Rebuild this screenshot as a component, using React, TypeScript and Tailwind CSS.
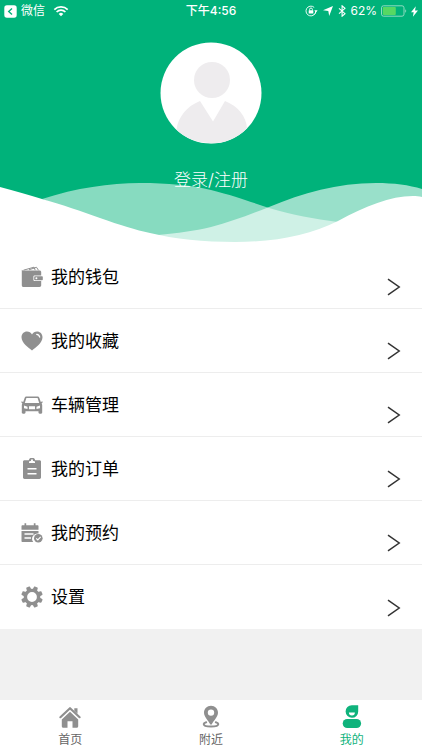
import type { ReactNode } from "react"

interface MenuItem {
  id: string
  label: string
  icon: ReactNode
}

interface TabItem {
  id: string
  label: string
  icon: ReactNode
  active?: boolean
}

function WalletIcon() {
  return (
    <svg viewBox="0 0 22 22" className="size-[22px]" aria-hidden="true">
      <path d="M2.5 4.2 13 1.2l1.2 3M8 3.8l7.5-2.5 2 3" fill="none" stroke="#8f8f8f" strokeWidth="1" />
      <path
        d="M.8 3.600c0 .7.700 1 1.700 1h16c1 0 1.700.6 1.700 1.500v3.400h-6.400c-.9 0-1.400.5-1.400 1.300v3c0 .8.500 1.300 1.400 1.300h6.400v4.200c0 1-.7 1.700-1.700 1.700h-16c-1 0-1.700-.7-1.700-1.800V3.600Z"
        fill="#8f8f8f"
      />
      <rect x="13.200" y="10.300" width="8.600" height="4" rx="0.800" fill="#8f8f8f" />
      <circle cx="15.400" cy="12.300" r="1" fill="#fff" />
    </svg>
  )
}

function HeartIcon() {
  return (
    <svg viewBox="0 0 22 22" className="size-[22px]" aria-hidden="true">
      <path
        d="M11 20.500C7.500 17.500.5 13 .5 7.200.5 3.900 2.900 1.500 6 1.500c2.200 0 4 1.100 5 2.900 1-1.800 2.800-2.900 5-2.900 3.100 0 5.500 2.400 5.500 5.700 0 5.800-7 10.300-10.500 13.300Z"
        fill="#8f8f8f"
      />
      <path d="M15.700 4.400c1.600.2 2.700 1.200 3 2.800" fill="none" stroke="#fff" strokeWidth="1.200" strokeLinecap="round" />
    </svg>
  )
}

function CarIcon() {
  return (
    <svg viewBox="0 0 22 22" className="size-[22px]" aria-hidden="true">
      <path
        fillRule="evenodd"
        d="M5.300 2.500h11.400c.8 0 1.300.4 1.600 1.200L19.800 8l1.700-.7v1.500l-.9.600c.4.500.6 1.100.6 1.800v7.300c0 .8-.5 1.200-1.300 1.200h-1.200c-.8 0-1.200-.5-1.200-1.200v-1.300h-13v1.300c0 .7-.5 1.200-1.200 1.200H2.100c-.8 0-1.300-.4-1.300-1.200v-7.300c0-.7.200-1.300.6-1.800L.5 8.800V7.300L2.200 8l1.500-4.300c.3-.8.800-1.200 1.600-1.200ZM5.400 4 3.800 9h14.400l-1.600-5H5.400ZM3 11.500v2.700l3.500.8v-2.300L3 11.500Zm16 0-3.500 1.200V15l3.500-.8v-2.700ZM8 12.200v3h6v-3H8Z"
        fill="#8f8f8f"
      />
    </svg>
  )
}

function ClipboardIcon() {
  return (
    <svg viewBox="0 0 22 22" className="size-[22px]" aria-hidden="true">
      <path
        fillRule="evenodd"
        d="M3.500 2.200h4.300a3.300 3.300 0 0 1 6.400 0h4.300c.8 0 1.500.6 1.500 1.400v16c0 .8-.7 1.400-1.500 1.400h-15c-.8 0-1.500-.6-1.500-1.400v-16c0-.8.700-1.400 1.500-1.400ZM11 1.300a1 1 0 0 0-1 1c0 .2 0 .4.200.5L8 3.500V5h6V3.500l-2.200-.7.200-.5a1 1 0 0 0-1-1ZM6.500 10v1.600h9V10h-9Zm0 5v1.600h9V15h-9Z"
        fill="#8f8f8f"
      />
    </svg>
  )
}

function CalendarIcon() {
  return (
    <svg viewBox="0 0 22 22" className="size-[22px]" aria-hidden="true">
      <path
        d="M1.500 3.300h2V1.300h1.700v2h7.600v-2h1.700v2h2c.6 0 1 .4 1 1v3.500H.5V4.300c0-.6.400-1 1-1Z"
        fill="#8f8f8f"
      />
      <path d="M.5 9h17v2.600a5.300 5.300 0 0 0-5.300 8.400H1.500c-.6 0-1-.4-1-1V9Z" fill="#8f8f8f" />
      <path d="M3.500 12h9M3.500 16h6.500" stroke="#fff" strokeWidth="1.400" />
      <circle cx="17.300" cy="16.300" r="4.300" fill="#8f8f8f" />
      <path d="m15.200 16.300 1.600 1.600 2.900-3" fill="none" stroke="#fff" strokeWidth="1.200" />
    </svg>
  )
}

function GearIcon() {
  return (
    <svg viewBox="0 0 22 22" className="size-[22px]" aria-hidden="true">
      <circle cx="11" cy="11" r="6.600" fill="none" stroke="#8f8f8f" strokeWidth="3.400" />
      {[22.5, 67.5, 112.5, 157.5, 202.5, 247.5, 292.5, 337.5].map((angle) => (
        <path
          key={angle}
          d="M8.600 3.800 9 .8c.1-.4.300-.6.700-.6h2.600c.4 0 .6.200.7.600l.4 3Z"
          transform={`rotate(${angle} 11 11)`}
          fill="#8f8f8f"
        />
      ))}
    </svg>
  )
}

function HomeIcon() {
  return (
    <svg viewBox="0 0 24 24" className="size-6" aria-hidden="true">
      <path d="M2.400 13.200 12 4.200l9.600 9" fill="none" stroke="#8f8f8f" strokeWidth="2.200" strokeLinecap="round" strokeLinejoin="round" />
      <path d="M16.300 4.300h3.200v5.500l-3.200-3V4.300Z" fill="#8f8f8f" />
      <path d="m12 7.700 8.200 7.700v6.900c0 .9-.6 1.500-1.500 1.500h-4.200v-6.500h-5v6.500H5.300c-.9 0-1.500-.6-1.500-1.500v-6.900L12 7.700Z" fill="#8f8f8f" />
    </svg>
  )
}

function PinIcon() {
  return (
    <svg viewBox="0 0 24 24" className="size-6" aria-hidden="true">
      <path
        fillRule="evenodd"
        d="M12 1.800c4 0 7 3 7 6.900 0 4-4.500 8-6.200 11.500-.3.600-1.300.6-1.600 0C9.500 16.700 5 12.700 5 8.700c0-3.900 3-6.900 7-6.900Zm0 3.600a3.200 3.200 0 1 0 0 6.400 3.200 3.200 0 0 0 0-6.400Z"
        fill="#8f8f8f"
      />
      <path d="M7.200 18.200c-1.700.5-2.500 1.100-2.500 1.800 0 1.600 3.200 2.600 7.300 2.600s7.300-1 7.300-2.600c0-.7-.8-1.300-2.500-1.800" fill="none" stroke="#8f8f8f" strokeWidth="2" strokeLinecap="round" />
    </svg>
  )
}

function ProfileIcon() {
  return (
    <svg viewBox="0 0 24 24" className="size-6" aria-hidden="true">
      <path d="M11.800 1.200h6.400v6.200a6.300 6.300 0 1 1-6.400-6.200Z" fill="#0fb37c" />
      <path d="M8.900 8.400h6a3 3 0 0 1-6 0Z" fill="#fff" />
      <rect x="2.700" y="15" width="18.400" height="9" rx="4.500" fill="#0fb37c" />
    </svg>
  )
}

const menuItems: MenuItem[] = [
  { id: "wallet", label: "我的钱包", icon: <WalletIcon /> },
  { id: "favorites", label: "我的收藏", icon: <HeartIcon /> },
  { id: "vehicles", label: "车辆管理", icon: <CarIcon /> },
  { id: "orders", label: "我的订单", icon: <ClipboardIcon /> },
  { id: "bookings", label: "我的预约", icon: <CalendarIcon /> },
  { id: "settings", label: "设置", icon: <GearIcon /> },
]

const tabs: TabItem[] = [
  { id: "home", label: "首页", icon: <HomeIcon /> },
  { id: "nearby", label: "附近", icon: <PinIcon /> },
  { id: "mine", label: "我的", icon: <ProfileIcon />, active: true },
]

function StatusBar() {
  return (
    <div className="grid h-[22px] grid-cols-[1fr_auto_1fr] items-center px-1 text-xs text-white">
      <div className="flex items-center gap-1">
        <svg viewBox="0 0 13 13" className="size-[13px]" aria-hidden="true">
          <rect x="0.300" y="0.300" width="12.400" height="12.400" rx="2.600" fill="#fff" />
          <path d="M8 3.400 4.700 6.500 8 9.600" fill="none" stroke="#00b27a" strokeWidth="1.400" />
        </svg>
        <span>微信</span>
        <svg viewBox="0 0 16 12" className="ml-1 h-3 w-4" aria-hidden="true">
          <path d="M1.300 4.600a9.600 9.600 0 0 1 13.400 0M3.600 7a6.300 6.300 0 0 1 8.800 0" fill="none" stroke="#fff" strokeWidth="1.700" />
          <path d="M5.700 8.900a3.300 3.300 0 0 1 4.600 0L8 11.300 5.700 8.900Z" fill="#fff" />
        </svg>
      </div>
      <span className="font-medium">下午4:56</span>
      <div className="flex items-center justify-end gap-1">
        <svg viewBox="0 0 13 12" className="h-3 w-[13px]" aria-hidden="true">
          <path d="M10.800 6a4.900 4.900 0 1 1-1.600-3.600M9 9.800a4.900 4.900 0 0 0 1.800-3.300" fill="none" stroke="#fff" strokeWidth="0.900" />
          <path d="M9.300 5.300h3.300L11 7.400Z" fill="#fff" />
          <rect x="3.700" y="5.300" width="4.600" height="3.300" rx="0.400" fill="#fff" />
          <path d="M4.600 5.500V4.400a1.400 1.400 0 0 1 2.800 0v1.100" fill="none" stroke="#fff" strokeWidth="0.900" />
        </svg>
        <svg viewBox="0 0 12 12" className="size-3" aria-hidden="true">
          <path d="M11 1 7.200 11 6.300 6.100 1 5.200Z" fill="#fff" />
        </svg>
        <svg viewBox="0 0 8 12" className="h-3 w-2" aria-hidden="true">
          <path d="m1 3.300 6 5.400-2.900 2.500V.8L7 3.300 1 8.700" fill="none" stroke="#fff" strokeWidth="1.100" />
        </svg>
        <span>62%</span>
        <svg viewBox="0 0 26 12" className="h-3 w-[26px]" aria-hidden="true">
          <rect x="0.500" y="0.800" width="22.500" height="10.400" rx="2" fill="none" stroke="#9fe0c8" strokeWidth="0.900" />
          <rect x="1.800" y="2.100" width="13" height="7.800" rx="0.800" fill="#56d863" />
          <path d="M24.300 4.300c1.200.4 1.200 3 0 3.400Z" fill="#9fe0c8" />
        </svg>
        <svg viewBox="0 0 7 11" className="h-[11px] w-[7px]" aria-hidden="true">
          <path d="M4.800.3 0 6.200h2.700L1.900 10.800 7 4.500H4Z" fill="#fff" />
        </svg>
      </div>
    </div>
  )
}

function Waves() {
  return (
    <svg
      viewBox="0 0 422 66"
      preserveAspectRatio="none"
      className="absolute inset-x-0 bottom-0 h-[66px] w-full"
      aria-hidden="true"
    >
      <path
        d="M42 20C76 9 110 4 140 4c28 0 50 2 71 7 24 6 40 12 58 18 24 7 45 11 69 14L300 64H150Z"
        fill="#fff"
        fillOpacity="0.530"
      />
      <path
        d="M158 56c20-2 36-4 53-8 20-5 40-13 58-20 34-14 68-24 107-24 18 0 33 2 46 6v56H158Z"
        fill="#fff"
        fillOpacity="0.600"
      />
      <path
        d="M0 8c15 4 29 8 42 12 21 6 39 12 58 19 20 7 36 12 50 15 24 6 54 9 85 9 42 0 74-7 103-21 28-15 52-25 75-25 3 0 6 0 9 1v48H0Z"
        fill="#fff"
      />
    </svg>
  )
}

function Avatar() {
  return (
    <svg viewBox="0 0 102 102" className="size-[102px]" aria-hidden="true">
      <circle cx="51" cy="51" r="50.500" fill="#fff" />
      <circle cx="52" cy="38" r="18" fill="#eeecee" />
      <path
        d="M16.500 87.800C18 75 27 64 40 59l13 20.500L65 59c13 5 21.500 16 22 27.200A50.500 50.500 0 0 1 16.500 87.800Z"
        fill="#eeecee"
      />
    </svg>
  )
}

export default function App() {
  return (
    <div className="flex min-h-screen flex-col bg-[#f1f1f1] font-['Inter','Noto_Sans_CJK_SC',sans-serif] text-black">
      <header className="relative h-[245px] bg-[#00b27a]">
        <Waves />
        <StatusBar />
        <div className="relative flex flex-col items-center pt-5">
          <Avatar />
          <button type="button" className="mt-6 text-[17px] leading-6 font-light text-white">
            登录/注册
          </button>
        </div>
      </header>

      <main className="flex-1">
        <ul className="divide-y divide-[#ededed] bg-white">
          {menuItems.map((item) => (
            <li key={item.id} className="h-16">
              <a href={`#${item.id}`} className="flex h-full items-center gap-2 px-[21px]">
                {item.icon}
                <span className="flex-1 text-[17px] leading-6">{item.label}</span>
                <svg viewBox="0 0 14 18" className="mb-3 h-[18px] w-[14px] self-end" aria-hidden="true">
                  <path d="M1 1.200 12.200 9 1 16.800" fill="none" stroke="#333" strokeWidth="1.500" />
                </svg>
              </a>
            </li>
          ))}
        </ul>
      </main>

      <nav className="grid h-[50px] grid-cols-3 bg-white">
        {tabs.map((tab) => (
          <a
            key={tab.id}
            href={`#${tab.id}`}
            aria-current={tab.active ? "page" : undefined}
            className={`flex flex-col items-center pt-1 text-xs leading-4 ${tab.active ? "text-[#0fb37c]" : "text-[#666]"}`}
          >
            {tab.icon}
            <span className="mt-1">{tab.label}</span>
          </a>
        ))}
      </nav>
    </div>
  )
}
